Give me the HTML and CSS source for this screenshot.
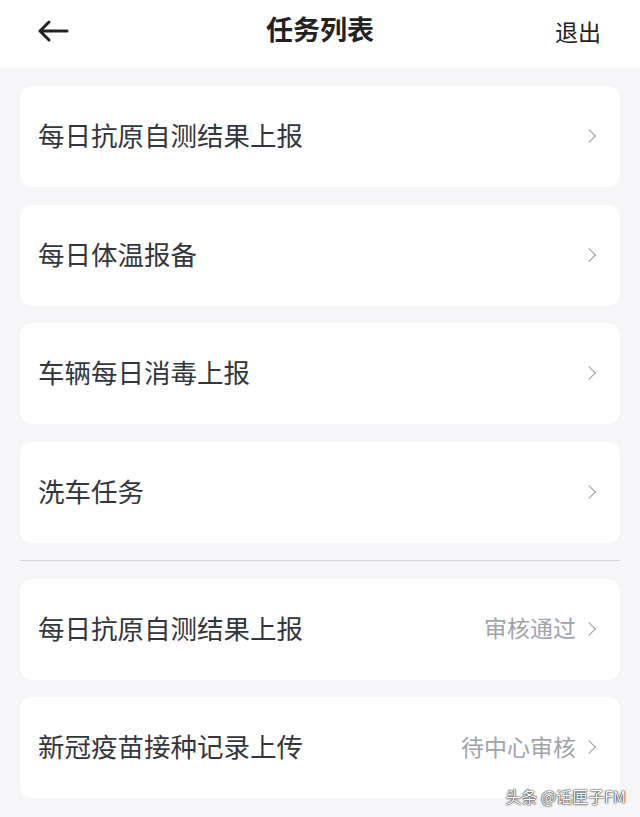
FILE: index.html
```html
<!DOCTYPE html>
<html lang="zh-CN">
<head>
  <meta charset="UTF-8">
  <title>任务列表</title>
  <link rel="stylesheet" href="styles.css">
</head>
<body>

  <div class="header">
    <svg class="back" width="32" height="22" viewBox="0 0 32 22">
      <path d="M30 11H3M12 2L3 11l9 9" fill="none" stroke="#222" stroke-width="3" stroke-linecap="round" stroke-linejoin="round"/>
    </svg>
    <div class="title">任务列表</div>
    <div class="logout">退出</div>
  </div>

  <div class="list">
    <div class="item"><span class="name">每日抗原自测结果上报</span><span class="arrow"></span></div>
    <div class="item"><span class="name">每日体温报备</span><span class="arrow"></span></div>
    <div class="item"><span class="name">车辆每日消毒上报</span><span class="arrow"></span></div>
    <div class="item"><span class="name">洗车任务</span><span class="arrow"></span></div>

    <div class="divider"></div>

    <div class="item"><span class="name">每日抗原自测结果上报</span><span class="status">审核通过</span><span class="arrow"></span></div>
    <div class="item"><span class="name">新冠疫苗接种记录上传</span><span class="status">待中心审核</span><span class="arrow"></span></div>
  </div>

  <div class="watermark">头条 @话匣子FM</div>

</body>
</html>
```

FILE: styles.css
```css
body { margin: 0; background: #f6f6f9; font-family: "Noto Sans CJK SC", "Noto Sans", sans-serif; color: #33363d; }
.header { height: 68px; background: #fff; display: flex; align-items: center; padding: 0 39px 6px 37px; box-sizing: border-box; position: relative; }
.back { display: block; }
.title { position: absolute; left: 0; right: 0; top: 9px; text-align: center; font-size: 27px; font-weight: 700; color: #222; pointer-events: none; }
.logout { margin-left: auto; font-size: 23px; color: #222; }
.list { padding: 18px 20px 0; display: flex; flex-direction: column; gap: 17.5px; }
.item { height: 101px; background: #fff; border-radius: 12px; display: flex; align-items: center; padding: 0 26px 4px 18px; box-sizing: border-box; }
.name { font-size: 26.5px; flex: 1; }
.status { font-size: 23px; color: #a0a3a9; margin-right: 8px; }
.arrow { width: 9px; height: 9px; border-top: 1.6px solid #9a9ca2; border-right: 1.6px solid #9a9ca2; transform: rotate(45deg); margin-top: 3px; }
.divider { height: 1px; background: #d6d7dc; }
.watermark { position: absolute; right: 14px; top: 784px; color: #fff; font-size: 16px; text-shadow: 0 0 2px #000, 0 0 1px #000; }
```
